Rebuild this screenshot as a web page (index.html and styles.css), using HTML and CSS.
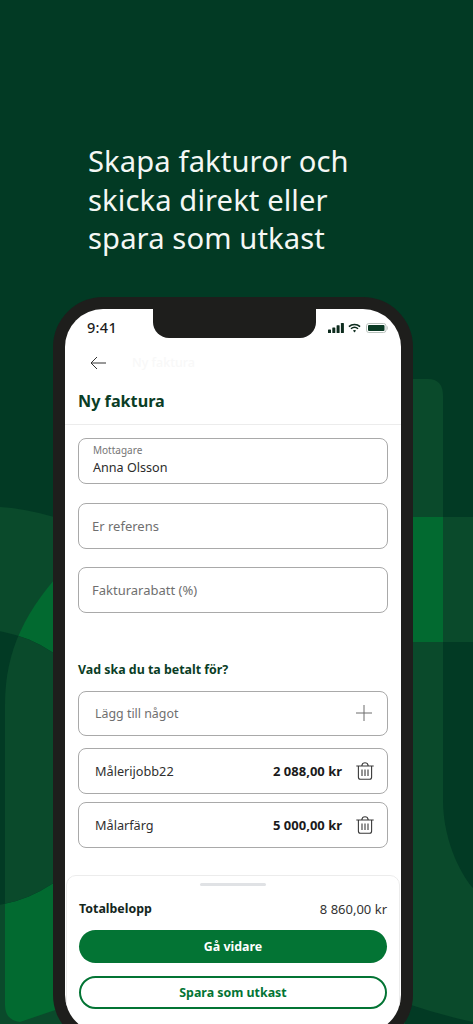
FILE: index.html
```html
<!DOCTYPE html>
<html lang="sv">
<head>
<meta charset="utf-8">
<title>Ny faktura</title>
<link rel="stylesheet" href="styles.css">
</head>
<body>
<div class="page">
  <svg class="backdrop" viewBox="0 0 473 1024" aria-hidden="true">
    <defs>
      <clipPath id="round-left"><circle cx="-24.5" cy="768" r="139"/></clipPath>
    </defs>
    <rect width="473" height="1024" fill="#023a24"/>
    <path d="M0 507 Q32 509 70 522 V1024 H0Z" fill="#0a4a2b"/>
    <path d="M5 705 C5 650 25 610 70 562 V1005 L20 1022 Q5 1020 5 1005Z" fill="#026a30"/>
    <circle cx="-24.5" cy="768" r="139" fill="#023a24"/>
    <path clip-path="url(#round-left)" d="M5 705 C5 650 25 610 70 562 V1005 L5 1005Z" fill="#0a4a2b"/>
    <path d="M400 379 H428 Q443 379 443 396 V800 C443 845 465 880 473 888 V1024 H400Z" fill="#0a4a2b"/>
    <path d="M443 517 H473 V642 H443Z" fill="#0a4a2b"/>
    <path d="M400 517 H443 V642 H400Z" fill="#026a30"/>
    <path d="M405 1003 Q440 1015 473 1022 V1024 H405Z" fill="#023a24"/>
  </svg>

  <h1 class="hero">Skapa fakturor och<br>skicka direkt eller<br>spara som utkast</h1>

  <div class="phone">
    <div class="notch"></div>
    <div class="screen">
      <div class="status">
        <span class="clock">9:41</span>
        <span class="status-icons">
          <svg class="ic-signal" viewBox="0 0 16 10"><rect x="0" y="6.5" width="3" height="3.5" rx=".6"/><rect x="4.3" y="4.5" width="3" height="5.5" rx=".6"/><rect x="8.6" y="2.2" width="3" height="7.8" rx=".6"/><rect x="12.9" y="0" width="3" height="10" rx=".6"/></svg>
          <svg class="ic-wifi" viewBox="0 0 14 10"><path d="M1 3.6C4.4.5 9.6.5 13 3.6M3.2 5.8C5.4 3.9 8.6 3.9 10.8 5.8" fill="none" stroke="#0d2b1d" stroke-width="1.7"/><path d="M5.3 7.7C6.3 6.9 7.7 6.9 8.7 7.7L7 9.8Z" fill="#0d2b1d"/></svg>
          <svg class="ic-battery" viewBox="0 0 22 10"><rect x=".5" y=".5" width="19.5" height="9" rx="2.4" fill="none" stroke="#b9c2bd"/><rect x="2" y="2" width="16.5" height="6" rx="1" fill="#0a3a24"/><rect x="20.8" y="3.4" width="1" height="3.2" fill="#c4cac6"/></svg>
        </span>
      </div>
      <div class="nav">
        <svg class="ic-back" viewBox="0 0 16 14"><path d="M16 7H1M7 1 1 7l6 6" fill="none" stroke="#333" stroke-width="1"/></svg>
        <span class="nav-ghost">Ny faktura</span>
      </div>
      <div class="title-row"><h2 class="title">Ny faktura</h2></div>

      <div class="content">
        <div class="field field-filled">
          <span class="field-label">Mottagare</span>
          <span class="field-value">Anna Olsson</span>
        </div>
        <div class="field field-ref"><span class="placeholder">Er referens</span></div>
        <div class="field field-disc"><span class="placeholder">Fakturarabatt (%)</span></div>

        <h3 class="section">Vad ska du ta betalt för?</h3>

        <div class="field row field-add">
          <span class="placeholder">Lägg till något</span>
          <svg class="ic-plus" viewBox="0 0 16 16"><path d="M8 0V16M0 8H16" stroke="#6c6c6c" stroke-width="1" fill="none"/></svg>
        </div>
        <div class="field row field-item">
          <span class="item-name">Målerijobb22</span>
          <span class="item-sum">2 088,00 kr</span>
          <svg class="ic-trash" viewBox="0 0 18 18"><use href="#trash"/></svg>
        </div>
        <div class="field row field-item second">
          <span class="item-name">Målarfärg</span>
          <span class="item-sum">5 000,00 kr</span>
          <svg class="ic-trash" viewBox="0 0 18 18"><use href="#trash"/></svg>
        </div>
      </div>

      <div class="sheet">
        <div class="handle"></div>
        <div class="total">
          <span class="total-label">Totalbelopp</span>
          <span class="total-sum">8 860,00 kr</span>
        </div>
        <div class="btn btn-primary">Gå vidare</div>
        <div class="btn btn-outline">Spara som utkast</div>
      </div>
    </div>
  </div>
</div>
<svg class="defs" aria-hidden="true">
  <symbol id="trash" viewBox="0 0 18 18">
    <path d="M.3 4H17.700M5.800 3.600C6.100 1.600 7.300.7 9 .7s2.900.9 3.200 2.900M2.400 4.500V15.300C2.400 16.500 3.200 17.300 4.400 17.300H13.600C14.800 17.300 15.600 16.500 15.600 15.300V4.500M6 7.500V14M9 7.500V14M12 7.500V14" fill="none" stroke="#3a3a3a" stroke-width="1.100"/>
  </symbol>
</svg>
</body>
</html>
```

FILE: styles.css
```css
* { box-sizing: border-box; }
html, body { margin: 0; padding: 0; }
body { font-family: "Noto Sans", "Open Sans", sans-serif; background: #023a24; }
.page { position: relative; width: 473px; height: 1024px; overflow: hidden; }
.backdrop { position: absolute; left: 0; top: 0; width: 473px; height: 1024px; }
.defs { position: absolute; width: 0; height: 0; }

.hero {
  position: relative;
  margin: 0;
  padding: 142px 0 0 88px;
  font-size: 29.200px;
  line-height: 38.5px;
  font-weight: 400;
  color: #f4f7f4;
  letter-spacing: .1px;
}

.phone {
  position: relative;
  margin: 39px 0 0 53px;
  width: 360px;
  height: 748px;
  padding: 12px;
  background: #1e1e1c;
  border-radius: 50px;
}
.notch {
  position: absolute;
  left: 100px;
  top: 12px;
  width: 163px;
  height: 29px;
  background: #1e1e1c;
  border-radius: 0 0 16px 16px;
}
.screen {
  height: 100%;
  background: #fff;
  border-radius: 38px;
  overflow: hidden;
  display: flex;
  flex-direction: column;
}

.status {
  flex: none;
  height: 36px;
  padding: 9px 13px 0 22px;
  display: flex;
  justify-content: space-between;
  align-items: flex-start;
}
.clock { font-size: 14.500px; line-height: 19px; font-weight: 500; color: #1b1b1b; letter-spacing: .3px; }
.status-icons { display: flex; align-items: center; gap: 4px; height: 21px; }
.ic-signal { width: 16px; height: 10px; fill: #0d2b1d; }
.ic-wifi { width: 13px; height: 10px; }
.ic-battery { width: 22px; height: 10px; margin-left: 1px; }

.nav { flex: none; height: 36px; padding-left: 25px; display: flex; align-items: center; }
.ic-back { width: 16px; height: 14px; }
.nav-ghost { margin-left: 26px; font-size: 12.500px; font-weight: 500; color: #f8f8f8; }

.title-row { flex: none; height: 44px; padding: 8px 0 0 13px; border-bottom: 1px solid #ececec; }
.title { margin: 0; font-size: 16.200px; line-height: 24px; font-weight: 700; color: #0a3d25; }

.content { padding: 13px 13px 0; flex: none; height: 450px; }
.field {
  border: 1px solid #a9a9a9;
  border-radius: 8px;
  height: 46px;
  background: #fff;
  display: flex;
  flex-direction: column;
  justify-content: center;
  padding: 0 14px;
}
.field-filled { justify-content: flex-start; padding-top: 5px; }
.field-label { font-size: 10px; line-height: 13px; color: #757575; }
.field-value { font-size: 12.600px; line-height: 20px; margin-top: 1px; color: #2b2b2b; }
.field-ref { margin-top: 19px; padding-left: 13px; }
.field-disc { margin-top: 18px; padding-left: 13px; }
.placeholder { font-size: 13px; color: #6f6f6f; }
.section { margin: 48px 0 0; font-size: 12.400px; line-height: 18px; font-weight: 700; color: #0a3d25; }
.row { flex-direction: row; align-items: center; padding: 0 14px 0 16px; }
.row .placeholder { flex: 1; font-size: 12.400px; padding-top: 1px; }
.field-add { margin-top: 12px; height: 45px; }
.field-item { margin-top: 12px; }
.field-item.second { margin-top: 8px; }
.ic-plus { width: 16px; height: 16px; margin-right: 1px; }
.item-name { flex: 1; font-size: 12.700px; color: #2f2f2f; }
.item-sum { font-size: 13px; font-weight: 700; color: #1b1b1b; margin-right: 14px; }
.ic-trash { width: 18px; height: 18px; margin-right: -1px; }

.sheet {
  flex: none;
  margin: 0 1px;
  height: 180px;
  border: 1px solid #ececec;
  border-radius: 10px 10px 0 0;
  padding: 7px 12px 0;
}
.handle { width: 66px; height: 3px; margin: 0 auto; background: #e0e2e5; border-radius: 2px; }
.total { display: flex; justify-content: space-between; align-items: center; height: 20px; margin-top: 13px; }
.total-label { font-size: 12.400px; font-weight: 700; color: #13261c; }
.total-sum { font-size: 13px; color: #333; }
.btn {
  height: 33px;
  border-radius: 17px;
  display: flex;
  align-items: center;
  justify-content: center;
  padding-top: 1px;
  font-size: 12.400px;
  font-weight: 700;
}
.btn-primary { margin-top: 11px; background: #037434; color: #fff; }
.btn-outline { margin-top: 13px; border: 2px solid #037434; color: #037434; background: #fff; }
```
